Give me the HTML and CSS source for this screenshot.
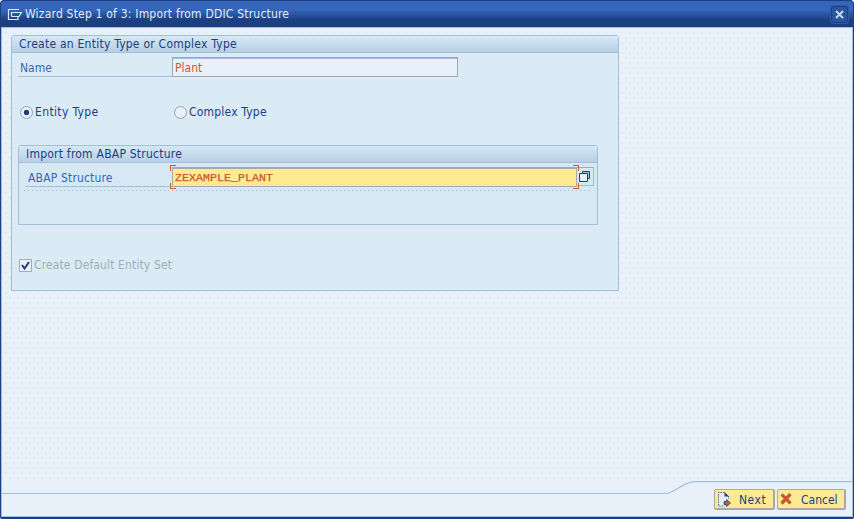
FILE: index.html
```html
<!DOCTYPE html>
<html lang="en">
<head>
<meta charset="utf-8">
<title>Wizard Step 1 of 3: Import from DDIC Structure</title>
<link rel="stylesheet" href="styles.css">
</head>
<body>
<div class="window">
  <header class="titlebar">
    <svg class="app-icon" width="16" height="13" viewBox="0 0 16 13"><path d="M11 9v2.500H1.500V1.500H12M4.500 8.500v-4H14.500L12 8.500H4.500" fill="none" stroke="#d5e8f4" stroke-width="1.200"/></svg>
    <h1 class="title">Wizard Step 1 of 3: Import from DDIC Structure</h1>
    <button class="close" aria-label="Close"><svg width="9" height="9" viewBox="0 0 9 9"><path d="M1 1l7 7M8 1L1 8" stroke="#c3d8ee" stroke-width="2"/></svg></button>
  </header>
  <main class="content">
    <section class="group">
      <h2 class="group-title t-create">Create an Entity Type or Complex Type</h2>
      <div class="row name-row">
        <label class="label"><span class="t-name">Name</span></label>
        <div class="field"><span class="t-plant">Plant</span></div>
      </div>
      <div class="radios">
        <label class="radio first"><i class="dot on"></i><span class="t-entity">Entity Type</span></label>
        <label class="radio"><i class="dot"></i><span class="t-complex">Complex Type</span></label>
      </div>
      <section class="group inner">
        <h2 class="group-title t-import">Import from ABAP Structure</h2>
        <div class="row abap-row">
          <label class="label"><span class="t-abap">ABAP Structure</span></label>
          <div class="field focus"><span class="value">ZEXAMPLE_PLANT</span>
            <i class="corner tl"></i><i class="corner bl"></i><i class="corner tr"></i><i class="corner br"></i>
          </div>
          <button class="help" aria-label="Search help"><svg width="13" height="13" viewBox="0 0 13 13"><path d="M4.500 1.500h7v7h-7z" fill="#a3bedb" stroke="#1b3f80"/><path d="M1.500 3.500h8v8h-8z" fill="#e8f1fa" stroke="#1b3f80"/></svg></button>
        </div>
        <div class="dots"></div>
      </section>
      <label class="check"><svg width="13" height="13" viewBox="0 0 13 13"><path d="M.5.5h12v12H.5z" fill="#e8f1fa" stroke="#a7abb0"/><path d="M3 6l2.500 3.500L10 3" fill="none" stroke="#1b3f80" stroke-width="2"/></svg><span class="t-default">Create Default Entity Set</span></label>
    </section>
  </main>
  <footer class="footer">
    <svg class="edge" width="850" height="16" viewBox="0 0 850 16"><path d="M0 12.500H664C672 12.500 681 .6 693 .6H850V16H0z" fill="#e8f1fa"/><path d="M0 12.500H664C672 12.500 681 .6 693 .6H850" fill="none" stroke="#a3bedb" stroke-width="1.200"/></svg>
    <div class="actions">
      <button class="btn next"><svg width="17" height="17" viewBox="0 0 17 17"><path d="M2.500 1.500h6l4 4v10h-10z" fill="#e8f1fa"/><path d="M8.500 1v4.500H13z" fill="#1b3f80"/><path d="M8.500 1.500h-6v13.500h6M12.500 5v3" fill="none" stroke="#1b3f80" stroke-width=".8" stroke-dasharray="1.500 1"/><path d="M8 10.500h2.500V8.500l4 3.500-4 3.500v-2H8z" fill="#d0572f" stroke="#1b3f80" stroke-width=".8"/></svg><span class="t-next">Next</span></button>
      <button class="btn cancel"><svg width="12" height="12" viewBox="0 0 12 12"><path d="M1.500 1.500q4 3 9 9M10.500 1L1.500 10.500" fill="none" stroke="#cb5730" stroke-width="3.300"/></svg><span class="t-cancel">Cancel</span></button>
    </div>
  </footer>
</div>
</body>
</html>
```
FILE: styles.css
```css
* { box-sizing: border-box; }
body { margin: 0; background: #fff; font: 12px/16px "DejaVu Sans Condensed", "DejaVu Sans", sans-serif; font-stretch: condensed; color: #1b3f80; }
h1, h2 { margin: 0; font-size: 12px; font-weight: normal; }
button { font: inherit; color: inherit; padding: 0; margin: 0; }
svg { display: block; flex: none; }
span, h1, h2 { white-space: nowrap; }
.window { width: 854px; height: 519px; display: flex; flex-direction: column; border: 1px solid #1b3f80; border-bottom-width: 2px; border-radius: 4px 4px 2px 2px; background: #1b3f80; overflow: hidden; }
.titlebar { height: 26px; flex: none; display: flex; align-items: center; padding: 0 5px 0 6px; background: linear-gradient(#3566bb 0 34%, #1b3f80 74%); color: #e0edf8; }
.title { margin-left: 2px; flex: 1; letter-spacing: .2px; }
.close { width: 17px; height: 17px; display: grid; place-items: center; border: 1px solid #1b3f80; border-radius: 3px; background: #2b559f; box-shadow: 0 0 0 1px #3158a0; }
.content { flex: 1; border: 1px solid #a3bedb; border-bottom: 0; background-color: #e8f1fa; background-image: radial-gradient(circle, #dcebf6 .7px, transparent 1px), radial-gradient(circle, #dcebf6 .7px, transparent 1px); background-size: 8px 10px; background-position: 0 0, 4px 5px; padding: 7px 0 0 9px; }
.group { width: 608px; height: 256px; border: 1px solid #a3bedb; border-radius: 3px 3px 0 0; background: #dbebf6; }
.group-title { height: 17px; line-height: 16px; padding-left: 7px; border-bottom: 1px solid #a3bedb; background: linear-gradient(#d5e8f4, #b7cee4); }
.t-create { letter-spacing: .24px; }
.t-entity { letter-spacing: .36px; }
.t-complex { letter-spacing: .2px; }
.t-import { letter-spacing: .23px; }
.t-abap { letter-spacing: .17px; }
.t-default { letter-spacing: .13px; }
.t-next { letter-spacing: .5px; }
.row { display: flex; align-items: flex-start; }
.label { color: #3566bb; border-bottom: 1px solid #a3bedb; }
.field { background: #e8f1fa; border: 1px solid #a3a7ac; color: #cb5730; box-shadow: inset 0 1px #a3bedb; }
.name-row { margin: 4px 0 0 6px; }
.name-row .label { width: 154px; height: 20px; padding: 3px 0 0 2px; }
.name-row .field { width: 286px; height: 20px; padding: 2px 0 0 2px; line-height: 16px; }
.radios { display: flex; margin: 27px 0 0 8px; height: 16px; }
.radio { display: flex; align-items: center; gap: 2px; }
.first { width: 154px; }
.dot { width: 13px; height: 13px; border: 1px solid #9ba2aa; border-radius: 50%; background: #e8f1fa; }
.on { background: radial-gradient(circle, #1b3f80 2.4px, #e8f1fa 3.1px); }
.inner { width: 580px; height: 80px; margin: 25px 0 0 6px; background: #d5e8f4; }
.abap-row { margin: 4px 0 0 6px; }
.abap-row .label { width: 147px; height: 20px; padding: 3px 0 0 3px; }
.focus { position: relative; width: 405px; height: 20px; background: #fdea92; border-color: #a7aaa8; border-width: 2px 1px 1px; padding: 0 0 0 2px; box-shadow: none; line-height: 16px; }
.value { font: 11.667px/16px "Liberation Mono", monospace; -webkit-text-stroke: .25px #cb5730; }
.corner { position: absolute; width: 6px; height: 6px; border: 0 solid #d0572f; }
.tl { left: -3px; top: -4px; border-width: 1px 0 0 1px; }
.bl { left: -3px; bottom: -3px; border-width: 0 0 1px 1px; }
.tr { right: -3px; top: -4px; border-width: 1px 1px 0 0; }
.br { right: -3px; bottom: -3px; border-width: 0 1px 1px 0; }
.help { width: 17px; height: 19px; display: grid; place-items: center; border: 1px solid #a3bedb; border-left: 0; border-top-color: #a7abb0; background: #d5e8f4; padding-right: 2px; }
.dots { height: 1px; margin: 3px 6px 0 5px; background: repeating-linear-gradient(90deg, #a3bedb 0 1px, transparent 1px 4px); }
.check { display: flex; align-items: center; gap: 2px; height: 16px; margin: 32px 0 0 7px; color: #a4abb2; }
.footer { height: 36px; flex: none; border: 1px solid #a3bedb; border-top: 0; background: #e8f1fa; }
.edge { width: 850px; }
.actions { display: flex; justify-content: flex-end; gap: 2px; margin-top: -8px; padding-right: 6px; }
.btn { position: relative; height: 21px; display: flex; align-items: center; border: 1px solid #a9a99f; border-width: 1px 2px 2px 1px; border-radius: 2px; background: #fdea92; }
.btn span { padding-top: 2px; }
.next { width: 61px; padding-left: 1px; gap: 6px; }
.cancel { width: 69px; padding-left: 2px; gap: 9px; }
```
